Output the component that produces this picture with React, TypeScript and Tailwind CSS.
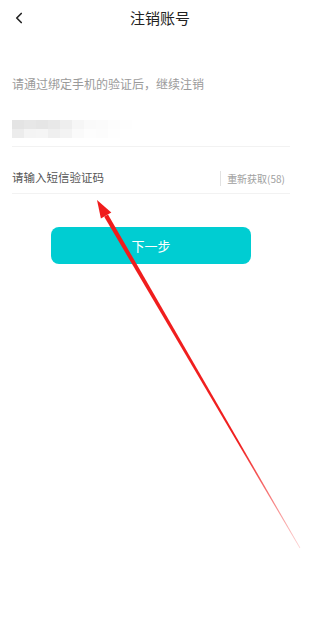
import { ChevronLeft } from "lucide-react";

const font = { fontFamily: '"Noto Sans CJK SC", "Noto Sans", sans-serif' };

// pixelated (mosaic) phone number
const mosaic = [
  ["#e4e4e4", "#e7e7e7", "#e5e5e5", "#e8e8e8", "#eeeeee", "#f6f6f6", "#fafafa", "#fbfbfb", "#fdfdfd", "#fefefe"],
  ["#ececec", "#f4f4f4", "#f5f5f5", "#efefef", "#f3f3f3", "#fafafa", "#fdfdfd", "#fcfcfc", "#fefefe", "#ffffff"],
];

export default function App() {
  return (
    <div className="relative w-[320px] h-[640px] bg-white overflow-hidden" style={font}>
      {/* header */}
      <div className="relative h-[36px] flex items-center justify-center">
        <button className="absolute left-[10px] top-[9px] text-[#222]">
          <ChevronLeft size={18} strokeWidth={2.2} />
        </button>
        <h1 className="text-[15px] text-[#222]">注销账号</h1>
      </div>

      <div className="px-3 pt-[38px]">
        <p className="text-[12px] leading-[20px] text-[#9a9a9a]">请通过绑定手机的验证后，继续注销</p>

        {/* phone */}
        <div className="h-[38px] w-[278px] mt-[15px] border-b border-[#f2f2f2] flex items-start pt-[11px]">
          <div className="flex flex-col">
            {mosaic.map((row, i) => (
              <div key={i} className="flex">
                {row.map((c, j) => (
                  <div key={j} className="w-[12px] h-[9px]" style={{ backgroundColor: c }} />
                ))}
              </div>
            ))}
          </div>
        </div>

        {/* sms code */}
        <div className="h-[47px] w-[278px] border-b border-[#f2f2f2] flex items-center pt-[16px]">
          <span className="flex-1 text-[11.5px] text-[#555]">请输入短信验证码</span>
          <span className="w-px h-[15px] bg-[#e2e2e2] mr-[6px]" />
          <span className="text-[10px] text-[#a0a0a0] mr-[5px]">重新获取(58)</span>
        </div>
      </div>

      <div className="flex mt-[33px] pl-[51px]">
        <button className="w-[200px] h-[37px] rounded-[8px] bg-[#00cdd2] text-white text-[13px]">
          下一步
        </button>
      </div>

      {/* red annotation arrow */}
      <svg className="absolute inset-0 pointer-events-none" width="320" height="640" viewBox="0 0 320 640">
        <defs>
          <linearGradient id="fade" x1="97" y1="200" x2="300" y2="548" gradientUnits="userSpaceOnUse">
            <stop offset="0" stopColor="#f01c1c" />
            <stop offset="0.7" stopColor="#f02020" />
            <stop offset="1" stopColor="#f02020" stopOpacity="0.2" />
          </linearGradient>
        </defs>
        <polygon points="97,200 100.9,218.6 111.3,212.6" fill="#f01c1c" />
        <polygon points="104.2,216.8 108,214.4 300.3,547.8 299.7,548.2" fill="url(#fade)" />
      </svg>
    </div>
  );
}
